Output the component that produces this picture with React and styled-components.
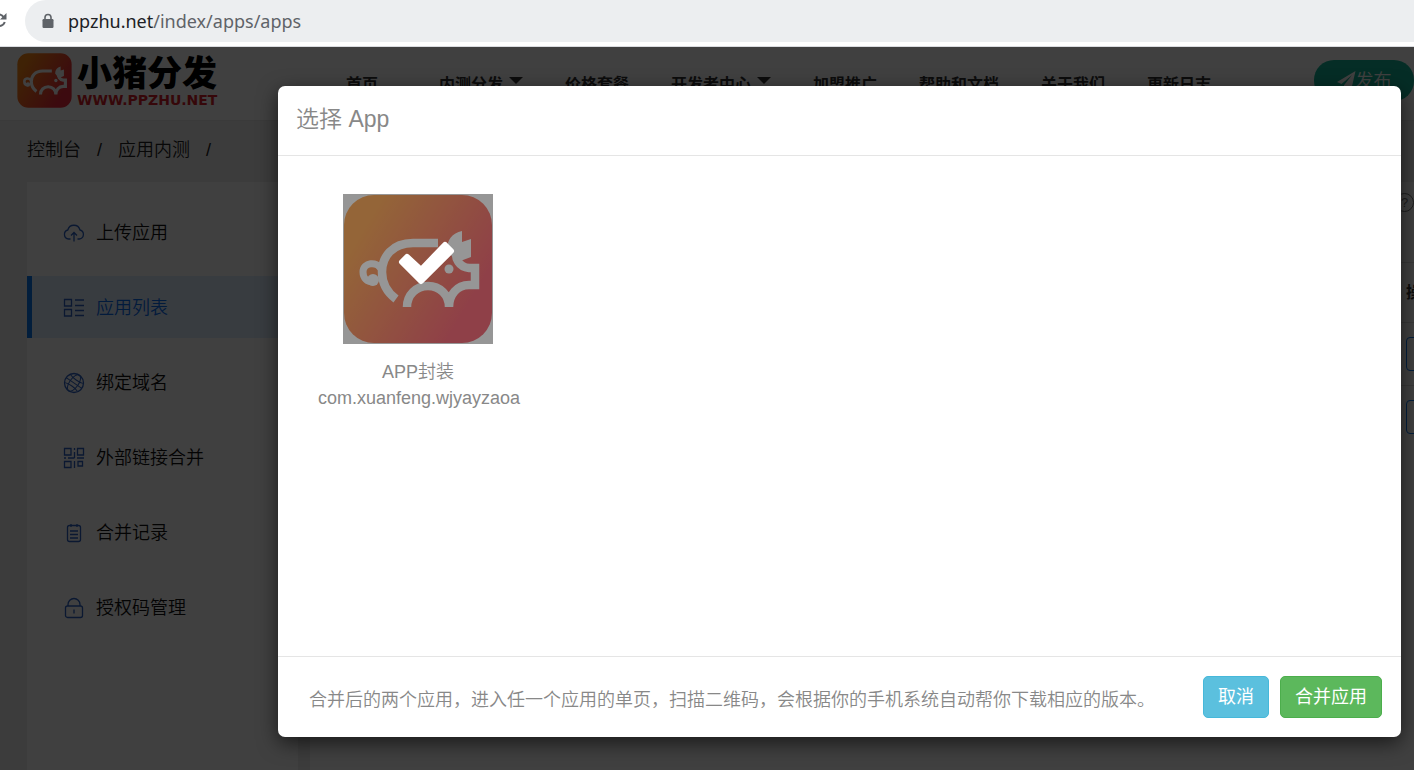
import styled, { createGlobalStyle } from "styled-components";

const sans = `"Liberation Sans", "Noto Sans CJK SC", sans-serif`;

const GlobalStyle = createGlobalStyle`
	* {
		box-sizing: border-box;
	}
	body {
		margin: 0;
		overflow: hidden;
		font-family: ${sans};
		font-size: 18px;
		line-height: 26px;
		color: #333;
	}
	h4,
	p {
		margin: 0;
		font-weight: 400;
	}
	a {
		color: inherit;
		text-decoration: none;
	}
	button {
		font: inherit;
		cursor: pointer;
	}
`;

const navLinks = [
	{ id: 1, text: "首页", reserve: true },
	{ id: 2, text: "内测分发", caret: true },
	{ id: 3, text: "价格套餐" },
	{ id: 4, text: "开发者中心", caret: true },
	{ id: 5, text: "加盟推广" },
	{ id: 6, text: "帮助和文档" },
	{ id: 7, text: "关于我们" },
	{ id: 8, text: "更新日志" },
];

const CloudIcon = () => (
	<Icon viewBox="0 0 22 22">
		<path d="M7.5 17H5.6A4.6 4.6 0 0 1 4.8 8 6.3 6.3 0 0 1 17 8a4.6 4.6 0 0 1-.6 9h-1.900" />
		<path d="M11 19.500v-8.500M8 13.500l3-3 3 3" />
	</Icon>
);

const ListIcon = () => (
	<Icon viewBox="0 0 22 22">
		<path d="M1.500 2.500h7v6.500h-7zM1.500 12.500h7V19h-7z" />
		<path d="M12 3h9M12 8.500h9M12 13.500h9M12 18.500h9" />
	</Icon>
);

const GlobeIcon = () => (
	<Icon viewBox="0 0 22 22">
		<circle cx="11" cy="11" r="9.500" />
		<g transform="rotate(35 11 11)" strokeWidth="1">
			<ellipse cx="11" cy="11" rx="4.500" ry="9.500" />
			<path d="M1.500 11h19M3.500 6.200c4 1.500 11 1.500 15 0M3.500 15.800c4-1.500 11-1.500 15 0" />
		</g>
	</Icon>
);

const QrIcon = () => (
	<Icon viewBox="0 0 22 22">
		<path d="M1.500 1.500h6.500v6.500H1.500zM14.500 1.500h6V8h-6zM1.500 14.500H8v6H1.500zM15 14.500h4.500V19H15z" />
		<path d="M11.500 1v2M11.500 5v6M1 11h2M5 11h6.500M14 11h7M11.500 14v7" />
	</Icon>
);

const NoteIcon = () => (
	<Icon viewBox="0 0 22 22">
		<rect x="4.500" y="3.500" width="13" height="16" rx="2" />
		<path d="M8 2v3M14 2v3M7 9h8M7 12.500h8M7 16h8" />
	</Icon>
);

const LockIcon = () => (
	<Icon viewBox="0 0 22 22">
		<rect x="2.500" y="9" width="17" height="11.500" rx="2" />
		<path d="M5 9V7.500a6 6 0 0 1 12 0V9M11 12.500v4" />
	</Icon>
);

const menu = [
	{ id: 1, text: "上传应用", icon: <CloudIcon /> },
	{ id: 2, text: "应用列表", icon: <ListIcon />, active: true },
	{ id: 3, text: "绑定域名", icon: <GlobeIcon /> },
	{ id: 4, text: "外部链接合并", icon: <QrIcon /> },
	{ id: 5, text: "合并记录", icon: <NoteIcon /> },
	{ id: 6, text: "授权码管理", icon: <LockIcon /> },
];

const PigLogo = ({ id }) => (
	<svg viewBox="0 0 150 150" width="100%" height="100%" aria-hidden="true">
		<defs>
			<linearGradient id={id} x1="0" y1="0.200" x2="1" y2="0.800">
				<stop offset="0.100" stopColor="#fa8614" />
				<stop offset="0.850" stopColor="#ee2a3c" />
			</linearGradient>
		</defs>
		<rect x="1" y="1" width="148" height="148" rx="30" fill={`url(#${id})`} />
		<g fill="none" stroke="#fff">
			<g strokeWidth="8.500">
				<path d="M95 49H70C49 49 39 63 39 78c0 12 6 21 14 27" />
				<path d="M64 113c0-12 9-21 21-21s21 9 21 21c0-12 8-22 20-22h6V74h-6c-10-1-14-9-13-18" />
			</g>
			<path d="M38 75c-4-8-18-7-18 3 0 6 4 10 10 10" strokeWidth="7" />
		</g>
		<g fill="#fff">
			<circle cx="30" cy="86" r="6" />
			<path d="M119 37c-10 2-15 9-15 19l8 10h8l8-3V45l-9 3z" />
			<circle cx="106" cy="75" r="4.500" />
		</g>
	</svg>
);

const App = () => {
	return (
		<Wrapper>
			<GlobalStyle />
			<Browser>
				<svg width="12" height="20" viewBox="0 0 12 20" aria-hidden="true">
					<path
						d="M-3 4.500a6.500 6.500 0 0 1 7 3M4.800 12a6.500 6.500 0 0 1-7 4"
						fill="none"
						stroke="#5f6368"
						strokeWidth="2"
					/>
					<path d="M6.500 3v6.500H0z" fill="#5f6368" />
				</svg>
				<Address>
					<svg width="12" height="16" viewBox="0 0 12 16" aria-hidden="true">
						<path d="M3 7V4.500a3 3 0 0 1 6 0V7" fill="none" stroke="#5f6368" strokeWidth="1.600" />
						<rect x="0.500" y="6" width="11" height="9" rx="1.200" fill="#5f6368" />
					</svg>
					<p>
						ppzhu.net<span>/index/apps/apps</span>
					</p>
				</Address>
			</Browser>

			<Page>
				<Header>
					<Brand href="#">
						<BrandMark>
							<PigLogo id="brand" />
						</BrandMark>
						<BrandText>
							<strong>小猪分发</strong>
							<small>WWW.PPZHU.NET</small>
						</BrandText>
					</Brand>
					<Nav>
						{navLinks.map(({ id, text, caret, reserve }) => (
							<NavLink href="#" key={id} $reserve={reserve}>
								{text}
								{caret && <Caret />}
							</NavLink>
						))}
					</Nav>
					<Publish type="button">
						<svg width="19" height="19" viewBox="0 0 19 19" aria-hidden="true">
							<path d="M18.500 0 0 11l4.500 2L15 4 7 14.200V19l3-3.600 4.500 2z" fill="currentColor" />
						</svg>
						发布
					</Publish>
				</Header>

				<Breadcrumb>
					<a href="#">控制台</a>
					<span>/</span>
					<a href="#">应用内测</a>
					<span>/</span>
				</Breadcrumb>

				<Columns>
					<Sidebar>
						{menu.map(({ id, text, icon, active }) => (
							<MenuLink href="#" key={id} $active={active}>
								{icon}
								{text}
							</MenuLink>
						))}
					</Sidebar>
					<Content>
						<Toolbar>
							<Help type="button">?</Help>
						</Toolbar>
						<Table>
							<thead>
								<tr>
									<th />
									<th>操作</th>
								</tr>
							</thead>
							<tbody>
								<tr>
									<td />
									<td>
										<RowButton type="button" aria-label="row 1" />
									</td>
								</tr>
								<tr>
									<td />
									<td>
										<RowButton type="button" aria-label="row 2" />
									</td>
								</tr>
							</tbody>
						</Table>
					</Content>
				</Columns>

				<Backdrop>
					<Modal role="dialog" aria-labelledby="modal-title">
						<ModalHeader>
							<h4 id="modal-title">选择 App</h4>
						</ModalHeader>
						<ModalBody>
							<AppCard>
								<Thumb>
									<PigLogo id="thumb" />
									<Checked>
										<svg viewBox="0 0 150 150" aria-hidden="true">
											<path
												d="M59 68l5-5 14 13 24-25 6 6-30 30z"
												fill="#fff"
												stroke="#fff"
												strokeWidth="6"
												strokeLinejoin="round"
											/>
										</svg>
									</Checked>
								</Thumb>
								<p>APP封装</p>
								<p>com.xuanfeng.wjyayzaoa</p>
							</AppCard>
						</ModalBody>
						<ModalFooter>
							<p>
								合并后的两个应用，进入任一个应用的单页，扫描二维码，会根据你的手机系统自动帮你下载相应的版本。
							</p>
							<Button type="button">取消</Button>
							<Button type="button" $success>
								合并应用
							</Button>
						</ModalFooter>
					</Modal>
				</Backdrop>
			</Page>
		</Wrapper>
	);
};

export default App;

const Wrapper = styled.div`
	display: flex;
	flex-direction: column;
	height: 100vh;
	overflow: hidden;
`;

const Browser = styled.header`
	display: flex;
	gap: 13px;
	padding-bottom: 4px;
	background: #fff;
	border-bottom: 1px solid #dadce0;

	> svg {
		margin-top: 10px;
	}
`;

const Address = styled.div`
	flex: 1;
	display: flex;
	align-items: center;
	gap: 14px;
	height: 42px;
	padding-left: 17px;
	border-radius: 21px 0 0 21px;
	background: #eceef0;

	p {
		font-family: "Noto Sans", sans-serif;
		font-size: 18px;
		color: #202124;
	}
	span {
		color: #5f6368;
	}
`;

const Page = styled.div`
	position: relative;
	flex: 1;
	display: flex;
	flex-direction: column;
	min-height: 0;
	background: #f0f0f0;
`;

const Header = styled.div`
	display: flex;
	align-items: center;
	height: 74px;
	padding-left: 17px;
	background: #fff;
	border-bottom: 1px solid #e8e8e8;
`;

const Brand = styled.a`
	display: flex;
	gap: 5px;
	width: 329px;
	margin-bottom: 6px;
	flex-shrink: 0;
`;

const BrandMark = styled.span`
	width: 55px;
	height: 55px;
`;

const BrandText = styled.span`
	display: flex;
	flex-direction: column;

	strong {
		font-size: 35px;
		line-height: 42px;
		font-weight: 900;
		color: #000;
	}
	small {
		font-family: "DejaVu Sans", sans-serif;
		font-size: 14px;
		line-height: 10px;
		font-weight: 700;
		color: #d81e28;
	}
`;

const Nav = styled.nav`
	flex: 1;
	display: flex;
	gap: 42px;
	padding-top: 2px;
`;

const NavLink = styled.a`
	display: flex;
	align-items: center;
	padding-right: ${({ $reserve }) => ($reserve ? "19px" : "0")};
	font-size: 16px;
	font-weight: 600;
	white-space: nowrap;
`;

const Caret = styled.i`
	margin: 0 0 8px 6px;
	border: 7px solid transparent;
	border-top-color: #333;
	border-bottom: 0;
`;

const Publish = styled.button`
	display: flex;
	align-items: center;
	justify-content: center;
	width: 100px;
	height: 41px;
	margin-bottom: 6px;
	border: 0;
	border-radius: 20px;
	background: #14b496;
	color: #fff;
	font-weight: 350;
`;

const Breadcrumb = styled.div`
	display: flex;
	gap: 16px;
	padding: 16px 27px;
	height: 61px;
	font-weight: 350;
	color: #222;
`;

const Columns = styled.div`
	flex: 1;
	display: flex;
	gap: 12px;
	padding-left: 27px;
`;

const Sidebar = styled.aside`
	display: flex;
	flex-direction: column;
	gap: 13px;
	width: 271px;
	flex-shrink: 0;
	padding-top: 19px;
	background: #fff;
`;

const MenuLink = styled.a`
	display: flex;
	align-items: center;
	gap: 11px;
	height: 62px;
	padding: 1px 0 0 31px;
	border-left: 5px solid ${({ $active }) => ($active ? "#0a78f0" : "transparent")};
	background: ${({ $active }) => ($active ? "#e0f0ff" : "transparent")};
	color: ${({ $active }) => ($active ? "#0a6cf0" : "#111")};
	font-weight: 350;
`;

const Icon = styled.svg`
	width: 22px;
	height: 22px;
	fill: none;
	stroke: #2c62c4;
	stroke-width: 1.3;
`;

const Content = styled.main`
	flex: 1;
	background: #fff;
`;

const Toolbar = styled.div`
	display: flex;
	justify-content: flex-end;
	height: 80px;
	padding-top: 11px;
`;

const Help = styled.button`
	width: 19px;
	height: 19px;
	padding: 0;
	border: 1px solid #777;
	border-radius: 50%;
	background: none;
	font-size: 13px;
	line-height: 17px;
	color: #777;
`;

const Table = styled.table`
	width: 100%;
	table-layout: fixed;
	border-collapse: collapse;

	th,
	td {
		height: 63px;
		padding: 0;
		border-top: 1px solid #e0e0e0;
		text-align: left;
		white-space: nowrap;
		overflow: hidden;
	}
	tr > :last-child {
		width: 8px;
	}
	th {
		height: 60px;
		font-size: 16px;
	}
`;

const RowButton = styled.button`
	display: block;
	width: 60px;
	height: 34px;
	border: 1px solid #0a78f0;
	border-radius: 4px;
	background: #fff;
`;

const Backdrop = styled.div`
	position: absolute;
	inset: 0;
	padding: 39px 13px 33px 278px;
	background: rgba(0, 0, 0, 0.75);
`;

const Modal = styled.section`
	display: flex;
	flex-direction: column;
	height: 100%;
	border-radius: 7px;
	background: #fff;
	box-shadow: 0 6px 20px rgba(0, 0, 0, 0.6);
	color: #888;
`;

const ModalHeader = styled.div`
	padding: 17px 18px;
	height: 70px;
	border-bottom: 1px solid #e5e5e5;

	h4 {
		font-size: 23px;
		line-height: 32px;
		font-weight: 350;
	}
`;

const ModalBody = styled.div`
	flex: 1;
	padding: 38px 40px;
`;

const AppCard = styled.div`
	width: 200px;
	text-align: center;

	p {
		font-weight: 350;
	}
`;

const Thumb = styled.div`
	position: relative;
	width: 150px;
	height: 150px;
	margin: 0 auto 15px;
`;

const Checked = styled.div`
	position: absolute;
	inset: 0;
	background: rgba(80, 80, 80, 0.6);
`;

const ModalFooter = styled.div`
	display: flex;
	align-items: center;
	gap: 11px;
	height: 81px;
	padding: 0 19px 0 31px;
	border-top: 1px solid #e5e5e5;

	p {
		flex: 1;
		padding-top: 6px;
		font-weight: 350;
		white-space: nowrap;
	}
`;

const Button = styled.button`
	height: 42px;
	padding: 0 14px;
	border: 1px solid ${({ $success }) => ($success ? "#4cae4c" : "#46b8da")};
	border-radius: 5px;
	background: ${({ $success }) => ($success ? "#5cb85c" : "#5bc0de")};
	color: #fff;
`;
